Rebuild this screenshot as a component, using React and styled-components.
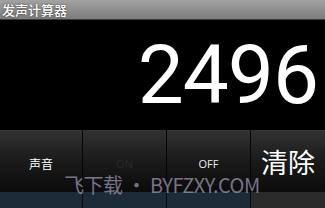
import React from "react";
import styled, { createGlobalStyle } from "styled-components";

const Global = createGlobalStyle`
  html, body {
    margin: 0;
    padding: 0;
    background: #000;
  }
  body {
    font-family: Roboto, "Noto Sans CJK SC", sans-serif;
  }
`;

const Screen = styled.div`
  position: relative;
  width: 325px;
  height: 208px;
  display: flex;
  flex-direction: column;
  overflow: hidden;
  background: #000;
`;

const TitleBar = styled.div`
  height: 20px;
  box-sizing: border-box;
  border-bottom: 1px solid #3a3a3a;
  background: linear-gradient(#a2a2a2, #7c7c7c);
  display: flex;
  align-items: center;
  padding-left: 2px;
  color: #fff;
  font-family: "Noto Sans CJK SC", sans-serif;
  font-size: 13px;
  font-weight: 500;
  text-shadow: 0 0 2px rgba(0, 0, 0, 0.7);
`;

const Display = styled.div`
  height: 110px;
  display: flex;
  align-items: center;
  justify-content: flex-end;
  padding-right: 7px;
  color: #fff;
  font-family: Roboto, sans-serif;
  font-size: 82px;
  line-height: 1;
  letter-spacing: -1px;
`;

const Keys = styled.div`
  display: grid;
  grid-template-columns: 82px 83px 83px 1fr;
  column-gap: 1px;
  background: #050505;
  height: 62px;
`;

const Key = styled.div`
  display: flex;
  align-items: center;
  justify-content: center;
  background: linear-gradient(#333 0%, #1c1c1c 45%, #0b0b0b 100%);
  color: ${(p) => p.$color || "#fff"};
  font-family: ${(p) => (p.$cjk ? `"Noto Sans CJK SC", sans-serif` : `"Open Sans", sans-serif`)};
  font-size: ${(p) => p.$size || 11}px;
  padding-top: ${(p) => p.$drop || 0}px;
`;

const Footer = styled.div`
  flex: 1;
  display: grid;
  grid-template-columns: 82px 83px 83px 1fr;
  column-gap: 1px;
  background: #0a0a0a;
`;

const FooterCell = styled.div`
  background: ${(p) => p.$bg};
`;

const Watermark = styled.div`
  position: absolute;
  left: 64px;
  top: 175px;
  color: rgba(170, 160, 190, 0.7);
  font-family: "Noto Sans CJK SC", sans-serif;
  font-size: 20px;
  line-height: 1;
  white-space: nowrap;
  letter-spacing: -0.5px;
`;

export default function App() {
  return (
    <>
      <Global />
      <Screen>
        <TitleBar>发声计算器</TitleBar>
        <Display>2496</Display>
        <Keys>
          <Key $cjk $size={12} $drop={4}>声音</Key>
          <Key $color="#2a2a2a" $drop={4}>ON</Key>
          <Key $color="#eee" $drop={4}>OFF</Key>
          <Key $cjk $size={27} $drop={0}>清除</Key>
        </Keys>
        <Footer>
          <FooterCell $bg="#1d2b38" />
          <FooterCell $bg="#1d2b38" />
          <FooterCell $bg="#1d2b38" />
          <FooterCell $bg="#2b2b2b" />
        </Footer>
        <Watermark>飞下载 • BYFZXY.COM</Watermark>
      </Screen>
    </>
  );
}
